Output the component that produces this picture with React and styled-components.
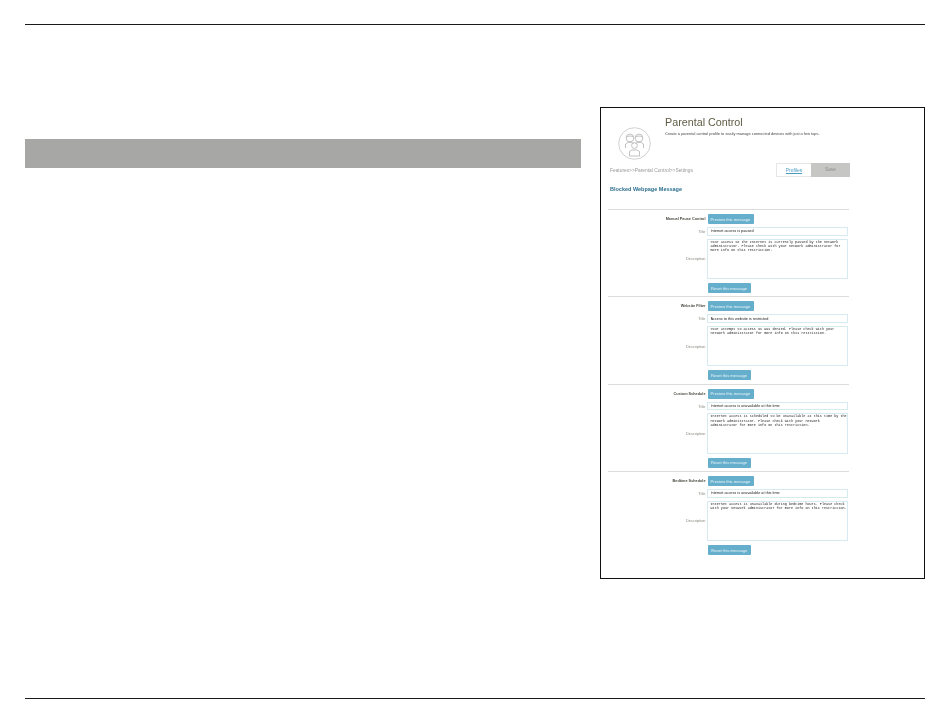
import React from "react";
import styled, { createGlobalStyle } from "styled-components";

const GlobalStyle = createGlobalStyle`
  html, body {
    margin: 0;
    padding: 0;
    background: #ffffff;
    font-family: "Liberation Sans", Arial, sans-serif;
  }
`;

const Page = styled.div`
  box-sizing: border-box;
  width: 950px;
  height: 725px;
  padding: 24px 25px 26px;
  display: flex;
  flex-direction: column;
  justify-content: space-between;
`;

const Rule = styled.hr`
  margin: 0;
  border: 0;
  height: 1px;
  background: #1a1a1a;
  flex: none;
`;

const Content = styled.div`
  flex: 1;
  display: flex;
  align-items: flex-start;
  padding-top: 82px;
`;

const LeftColumn = styled.div`
  width: 556px;
  padding-top: 32px;
`;

const SectionBand = styled.div`
  height: 29px;
  background: #a7a7a5;
`;

const Frame = styled.div`
  box-sizing: border-box;
  margin-left: 19px;
  width: 325px;
  height: 472px;
  border: 1px solid #111111;
  padding: 7px 75px 0 7px;
`;

/* the reference is a scaled down capture, so everything inside the frame is a little soft */
const FrameBody = styled.div`
  filter: blur(0.3px);
`;

const Header = styled.div`
  display: flex;
  height: 47px;
`;

const IconWrap = styled.div`
  width: 57px;
  padding: 12px 0 0 9px;
  box-sizing: border-box;
`;

const HeaderText = styled.div`
  padding-top: 1px;
`;

const Heading = styled.div`
  font-size: 10.75px;
  line-height: 13px;
  color: #5f5b45;
`;

const Subheading = styled.div`
  font-size: 3.93px;
  line-height: 6px;
  color: #444444;
  margin-top: 2px;
  white-space: nowrap;
`;

const Crumbs = styled.div`
  display: flex;
  align-items: center;
  justify-content: space-between;
  height: 15px;
`;

const CrumbText = styled.div`
  padding: 2px 0 0 2px;
  font-size: 4.85px;
  color: #999999;
`;

const Tabs = styled.div`
  display: flex;
  height: 14px;
  margin-right: -1px;
`;

const TabLink = styled.a`
  box-sizing: border-box;
  width: 35px;
  border: 1px solid #e6e6e6;
  border-right: 0;
  font-size: 4.9px;
  line-height: 13px;
  text-align: center;
  color: #4b9bc0;
  text-decoration: underline;
`;

const TabSave = styled.div`
  width: 39px;
  background: #c6c6c4;
  font-size: 4.9px;
  line-height: 14px;
  text-align: center;
  color: #8f8f8f;
`;

const PageTitle = styled.div`
  margin: 9px 0 0 2px;
  height: 23px;
  font-size: 5.5px;
  line-height: 7px;
  font-weight: bold;
  color: #2c6f8f;
`;

const Section = styled.section`
  border-top: 1px solid #dcdcdc;
  padding-top: 4px;
  height: 87.4px;
  box-sizing: border-box;
  display: grid;
  grid-template-columns: 98.5px 141px;
  grid-auto-rows: min-content;
  column-gap: 0.5px;
  align-items: center;
`;

const Label = styled.div`
  padding-right: 1px;
  font-size: ${(props) => (props.strong ? "3.8px" : "3.9px")};
  font-weight: ${(props) => (props.strong ? "bold" : "normal")};
  color: ${(props) => (props.strong ? "#4a4a40" : "#8a8a80")};
  text-align: right;
  white-space: nowrap;
`;

const ActionButton = styled.button`
  display: block;
  justify-self: start;
  margin-left: 0.5px;
  padding: 0;
  width: ${(props) => props.$width}px;
  height: 10px;
  border: 0;
  border-radius: 1px;
  background: #66afcc;
  color: #eaf4f8;
  font-family: inherit;
  font-size: 4.1px;
`;

const TitleInput = styled.input`
  display: block;
  box-sizing: border-box;
  grid-column: 2;
  width: 141px;
  height: 8.5px;
  margin: 3px 0;
  padding: 0 2.5px;
  border: 1px solid #d8eaf1;
  outline: 0;
  font-family: inherit;
  font-size: 3.8px;
  color: #222222;
`;

const MessageBox = styled.textarea`
  display: block;
  box-sizing: border-box;
  width: 141px;
  height: 40.5px;
  margin: 0;
  padding: 0 0 0 2.5px;
  border: 1px solid #d8eaf1;
  outline: 0;
  resize: none;
  overflow: hidden;
  font-family: "Liberation Mono", monospace;
  font-size: 3.44px;
  line-height: 4.4px;
  color: #1c1c1c;
`;

const ResetRow = styled.div`
  grid-column: 2;
  padding-top: 4px;
`;

const FamilyIcon = () => (
  <svg width="35" height="34" viewBox="0 0 35 34" fill="none" stroke="#a8a8a8" strokeWidth="0.7">
    <circle cx="17.5" cy="16.5" r="15.8" stroke="#bdbdbd" />
    <circle cx="13" cy="11" r="3.9" />
    <circle cx="22" cy="11" r="3.9" />
    <path d="M9.5 10c2-1.3 5-1.3 7 0M18.5 10c2-1.3 5-1.3 7 0" />
    <path d="M8.5 21v-4l2.5-1.7h4l1.5 1.5M26.5 21v-4L24 15.3h-4l-1.5 1.5" />
    <circle cx="17.5" cy="18.5" r="2.9" />
    <path d="M12.5 29v-4.5l2.5-1.5h5l2.5 1.5V29z" />
  </svg>
);

const messages = [
  {
    name: "Manual Pause Control",
    title: "Internet access is paused",
    body: "Your access to the Internet is currently paused by the network administrator. Please check with your network administrator for more info on this restriction.",
  },
  {
    name: "Website Filter",
    title: "Access to this website is restricted",
    body: "Your attempt to access %s was denied. Please check with your network administrator for more info on this restriction.",
  },
  {
    name: "Custom Schedule",
    title: "Internet access is unavailable at this time",
    body: "Internet access is scheduled to be unavailable at this time by the network administrator. Please check with your network administrator for more info on this restriction.",
  },
  {
    name: "Bedtime Schedule",
    title: "Internet access is unavailable at this time",
    body: "Internet access is unavailable during bedtime hours. Please check with your network administrator for more info on this restriction.",
  },
];

const App = () => {
  return (
    <Page>
      <GlobalStyle />
      <Rule />
      <Content>
        <LeftColumn>
          <SectionBand />
        </LeftColumn>
        <Frame>
          <FrameBody>
            <Header>
              <IconWrap>
                <FamilyIcon />
              </IconWrap>
              <HeaderText>
                <Heading>Parental Control</Heading>
                <Subheading>
                  Create a parental control profile to easily manage connected devices with just a few taps.
                </Subheading>
              </HeaderText>
            </Header>
            <Crumbs>
              <CrumbText>Features&gt;&gt;Parental Control&gt;&gt;Settings</CrumbText>
              <Tabs>
                <TabLink>Profiles</TabLink>
                <TabSave>Save</TabSave>
              </Tabs>
            </Crumbs>
            <PageTitle>Blocked Webpage Message</PageTitle>
            {messages.map((item) => (
              <Section key={item.name}>
                <Label strong>{item.name}</Label>
                <ActionButton $width={46}>Preview this message</ActionButton>
                <Label>Title</Label>
                <TitleInput readOnly value={item.title} />
                <Label>Description</Label>
                <MessageBox readOnly value={item.body} />
                <ResetRow>
                  <ActionButton $width={43}>Reset this message</ActionButton>
                </ResetRow>
              </Section>
            ))}
          </FrameBody>
        </Frame>
      </Content>
      <Rule />
    </Page>
  );
};

export default App;
